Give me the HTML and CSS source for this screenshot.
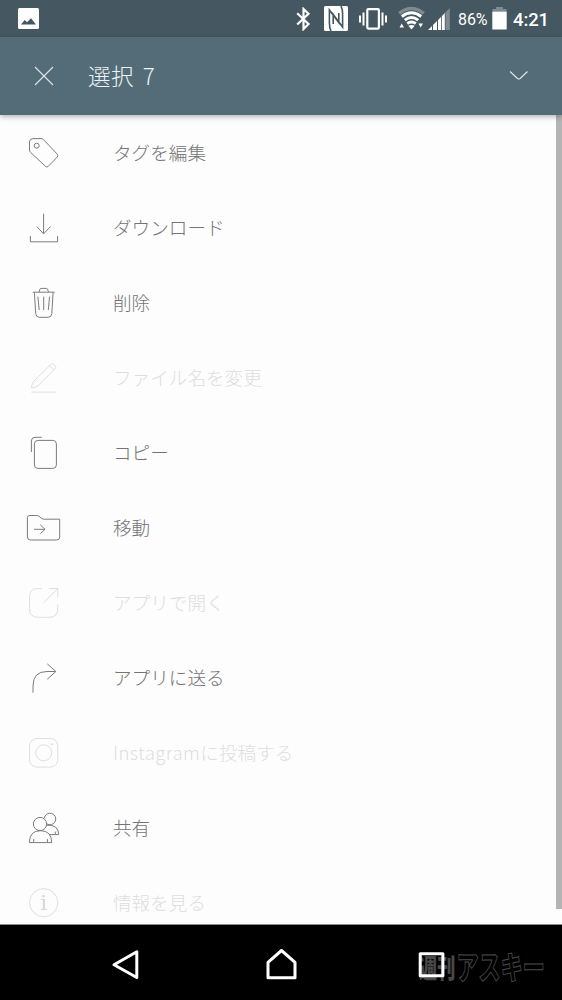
FILE: index.html
```html
<!DOCTYPE html>
<html lang="ja">
<head>
<meta charset="utf-8">
<title>選択 7</title>
<link rel="stylesheet" href="styles.css">
</head>
<body>
<div class="screen">
  <div class="status">
    <svg class="photo" width="21" height="21" viewBox="0 0 21 21"><rect width="21" height="21" rx="1.5" fill="#fff"/><path d="M3 16.5 6.7 12 9 14.3 13 10.3 18 16.5z" fill="#455761"/></svg>
    <svg class="bt" width="15" height="24" viewBox="0 0 15 24"><path d="M1.2 6.2 12.5 17 7.5 22V2l5 4.8L1.2 17.5" fill="none" stroke="#fff" stroke-width="2.2"/></svg>
    <svg class="nfc" width="24" height="26" viewBox="0 0 24 26"><rect width="24" height="25" rx="1.5" fill="#fff"/><path d="M7 25Q5.4 22 5.4 17V4L14.8 16.5V7M17 0Q18.6 3 18.6 8V21L9.2 8.5V18" fill="none" stroke="#455761" stroke-width="1.6"/></svg>
    <svg class="vibe" width="28" height="22" viewBox="0 0 28 22"><rect x="8.3" y="1.2" width="11.6" height="19.4" rx="1" fill="none" stroke="#fff" stroke-width="2.2"/><path d="M1 7.5v7M4.5 4.5v13M23.5 4.5v13M27 7.5v7" stroke="#fff" stroke-width="2"/></svg>
    <svg class="wifi" width="27" height="24" viewBox="0 0 27 24"><path d="M1.2 6.3Q13.5-3.3 25.8 6.3" fill="none" stroke="#7d8a92" stroke-width="3.5"/><path d="M3.8 9.5Q13.5 1.9 23.2 9.5M6.8 13.2Q13.5 8 20.2 13.2M9.2 16.5Q13.5 13.5 17.8 16.5" fill="none" stroke="#fff" stroke-width="2.9"/><path d="M10.3 18.8Q13.5 17 16.7 18.8L13.5 22.5zM1.5 20.5h4.5L3.7 16.5zM20.5 16.5H25L22.7 20.5z" fill="#fff"/></svg>
    <svg class="signal" width="22" height="23" viewBox="0 0 22 23"><path d="M17.5 4.5 21.8 0V22H17.5z" fill="#7d8a92"/><path d="M0 22 4 18V22zM5 17l4-4v9H5zM10 12l3-3v13h-3zM13.8 8.2 16.8 5V22h-3z" fill="#fff"/></svg>
    <span class="pct">86%</span>
    <svg class="battery" width="15" height="24" viewBox="0 0 15 24"><path d="M4 0h7v2h3.5v3H.5V2H4z" fill="#7d8a92"/><path d="M.3 4.7h14.4V22.5H.3z" fill="#fff"/></svg>
    <span class="clock">4:21</span>
  </div>
  <header class="header">
    <svg class="close" width="20" height="20" viewBox="0 0 20 20"><path d="M1 1 19 19M19 1 1 19"/></svg>
    <h1 class="title">選択 7</h1>
    <svg class="chevron" width="20" height="12" viewBox="0 0 20 12"><path d="M1 1.5 8.5 8.5q1.3 1.1 2.6 0L18.5 1.5"/></svg>
  </header>
  <main class="list">
    <div class="item"><svg class="icon" viewBox="0 0 40 40"><path d="M9 5.6h8q1.5 0 2.5 1L33.3 21.2q1.2 1.4 0 2.8l-9 9.3q-1.4 1.4-2.8 0L6.7 19.5q-1.2-1-1.2-2.5V9q0-3.4 3.5-3.4z"/><circle cx="12.7" cy="12.7" r="2.5"/></svg><span class="label">タグを編集</span></div>
    <div class="item"><svg class="icon" viewBox="0 0 40 40"><path d="M19.6 5.7V26M12.7 18.5l6.9 7.3 7-7.3M6.4 28v5.8h27.2V28"/></svg><span class="label">ダウンロード</span></div>
    <div class="item"><svg class="icon" viewBox="0 0 40 40"><path d="M8.7 9.2h22M15 9l1-3q.3-.6 1-.6h5.5q.7 0 1 .6l1 3M10.4 9.5l1.3 21q.2 3.8 3.8 3.8H24q3.6 0 3.8-3.8l1.3-21M13.9 13.7 15.2 27M19.7 13.7V27M25.6 13.7 24.3 27"/></svg><span class="label">削除</span></div>
    <div class="item off"><svg class="icon" viewBox="0 0 40 40"><path d="M7.5 30q.2-4 2.5-7L27 6.3q1.3-1.3 2.6 0L31.3 8q1.2 1.2 0 2.5L14 27.7Q11 30 7.5 30zM25.5 7.8l4.2 4.2M7.3 34.1H32"/></svg><span class="label">ファイル名を変更</span></div>
    <div class="item"><svg class="icon" viewBox="0 0 40 40"><rect x="10.4" y="7.4" width="22" height="28" rx="3.5"/><path d="M7.4 19V8q0-3.7 3.7-3.7h6.6"/></svg><span class="label">コピー</span></div>
    <div class="item"><svg class="icon" viewBox="0 0 40 40"><path d="M5.5 7.5h7.3q1.2 0 2.2.8L18 10.6q.8.6 1.8.6h15.9V29q0 3-3 3H6.4q-3 0-3-3V9.5q0-2 2.1-2zM10 21.3h11M16.3 16.8l4.7 4.5-4.7 4.5"/></svg><span class="label">移動</span></div>
    <div class="item off"><svg class="icon" viewBox="0 0 40 40"><path d="M17.7 5.5h-3.4q-8.8 0-8.8 8.8v11.2q0 8.8 8.8 8.8h10.9q8.6 0 8.6-8.8v-4M19.7 19.7 33.5 5.8M25 5.5h8.8v8.8"/></svg><span class="label">アプリで開く</span></div>
    <div class="item"><svg class="icon" viewBox="0 0 40 40"><path d="M9 34.7V28Q9 13.5 23 13.5h8.8M23.3 5.9l8.6 7.6-8.6 7.7"/></svg><span class="label">アプリに送る</span></div>
    <div class="item off"><svg class="icon" viewBox="0 0 40 40"><rect x="5.5" y="5.5" width="28.3" height="28.6" rx="7.5"/><circle cx="19.7" cy="19.8" r="8"/><circle cx="28" cy="11.4" r=".7"/></svg><span class="label"><span class="latin">Instagram</span>に投稿する</span></div>
    <div class="item"><svg class="icon" viewBox="0 0 40 40"><circle cx="16" cy="16" r="6.6"/><path d="M20.2 10.2A5.8 5.8 0 1 1 22.7 15.8M5.4 34.6Q5.4 22.7 16.5 22.7T27.7 34.6zM9.7 34.6v-3.5M23.4 34.6v-3.5M22.5 17.2Q34.5 16.2 34.7 26.6H25M31.3 26.6v-3"/></svg><span class="label">共有</span></div>
    <div class="item off"><svg class="icon" viewBox="0 0 40 40"><circle cx="19.7" cy="19.7" r="14.1"/><text class="info" x="19.7" y="26.5" text-anchor="middle">i</text></svg><span class="label">情報を見る</span></div>
    <div class="scrollbar"></div>
  </main>
  <nav class="nav">
    <svg class="nav-icons" width="562" height="75" viewBox="0 925 562 75">
      <text class="mark solid" transform="translate(419 977.5) scale(.7 1)">週刊</text>
      <text class="mark hollow" transform="translate(456.5 979) scale(.69 1)">アスキー</text>
      <g fill="none" stroke="#fff" stroke-width="3" stroke-linejoin="round"><path d="M114 964.7 136.8 951.7V977.5z"/><path d="M268 977.7V962.3L281.5 950.5 295 962.3V977.7z"/><rect x="420.2" y="953.8" width="22.7" height="22"/></g>
    </svg>
  </nav>
</div>
</body>
</html>
```
FILE: styles.css
```css
* { box-sizing: border-box; }
body { margin: 0; background: #fdfdfd; }
.screen {
  width: 562px; height: 1000px; overflow: hidden;
  display: flex; flex-direction: column;
  font-family: "Noto Sans CJK JP", sans-serif;
}
.status {
  height: 37px; flex: none; display: flex; align-items: flex-start;
  padding-left: 18px; background: #455761; color: #fff;
  font-family: Roboto, sans-serif; line-height: 24px;
}
.status svg { flex: none; }
.photo { margin-top: 8px; }
.bt { margin: 7px 0 0 257px; }
.nfc { margin: 6px 0 0 13px; }
.vibe { margin: 8px 0 0 11px; }
.wifi { margin: 7px 0 0 11px; }
.signal { margin: 8px 0 0 3px; }
.pct { width: 34px; margin: 8px 0 0 8px; font-size: 16px; letter-spacing: -.1px; }
.battery { margin: 7px 0 0 0; }
.clock { margin: 8px 0 0 6px; font-size: 18.5px; font-weight: 500; letter-spacing: -.1px; }
.header {
  height: 78px; flex: none; display: flex; align-items: center;
  padding: 0 33px 0 34px; background: #546c77; color: #eef3f5;
  position: relative; z-index: 1; box-shadow: 0 2px 5px rgba(0, 0, 0, .28);
}
.header svg { fill: none; stroke: #dfe6e9; stroke-width: 1.1; }
.title { margin: 0 auto 2px 34px; font-size: 22.5px; font-weight: 300; line-height: 30px; letter-spacing: .6px; word-spacing: 3px; }
.list { height: 809px; flex: none; overflow: hidden; position: relative; background: #fdfdfd; }
.item {
  height: 75px; display: flex; align-items: center; gap: 49px;
  padding-left: 24px; color: #747474;
  font-size: 18.6px; font-weight: 300; line-height: 28px; white-space: nowrap;
}
.label { padding-bottom: 2px; }
.latin { letter-spacing: .4px; }
.icon { width: 40px; height: 40px; flex: none; fill: none; stroke: #7c7c7c; stroke-width: 1; }
.off { color: #dedede; }
.off .icon { stroke: #dfdfdf; }
.info { font: 20px "DejaVu Serif", serif; fill: #d4d4d4; stroke: none; }
.scrollbar { position: absolute; right: 0; top: 0; width: 6px; height: 794px; background: #b4b4b4; }
.nav { height: 76px; flex: none; background: #000; border-top: 1px solid #8c8c8c; }
.nav-icons { display: block; }
.mark { font-weight: 900; font-family: "Noto Sans CJK JP", sans-serif; }
.solid { font-size: 26px; fill: #484848; }
.hollow { font-size: 32px; fill: #000; stroke: #4c4c4c; stroke-width: 1; }
```
